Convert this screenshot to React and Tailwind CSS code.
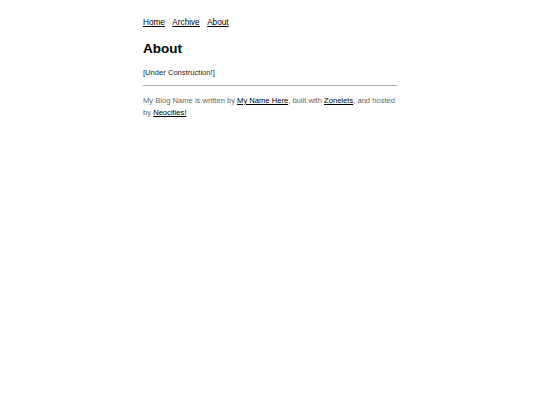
export default function App() {
  return (
    <div className="min-h-screen bg-white font-['Liberation_Sans',Arial,sans-serif] text-black">
      <div className="mx-auto w-[254px] pt-[17px]">
        <nav className="flex gap-[7.5px] text-[8.2px] leading-[12px]">
          <a href="#" className="underline">Home</a>
          <a href="#" className="underline">Archive</a>
          <a href="#" className="underline">About</a>
        </nav>
        <h1 className="mt-[12px] text-[13.5px] font-bold leading-[16px]">About</h1>
        <p className="mt-[10px] text-[7.6px] leading-[12px] text-[#222222]">[Under Construction!]</p>
        <hr className="mt-[6px] border-0 border-t border-[#aaaaaa]" />
        <footer className="mt-[9px] text-[7.6px] leading-[12px] text-[#666666]">
          My Blog Name is written by <a href="#" className="text-black underline">My Name Here</a>, built with{" "}
          <a href="#" className="text-black underline">Zonelets</a>, and hosted by{" "}
          <a href="#" className="text-black underline">Neocities!</a>
        </footer>
      </div>
    </div>
  );
}
